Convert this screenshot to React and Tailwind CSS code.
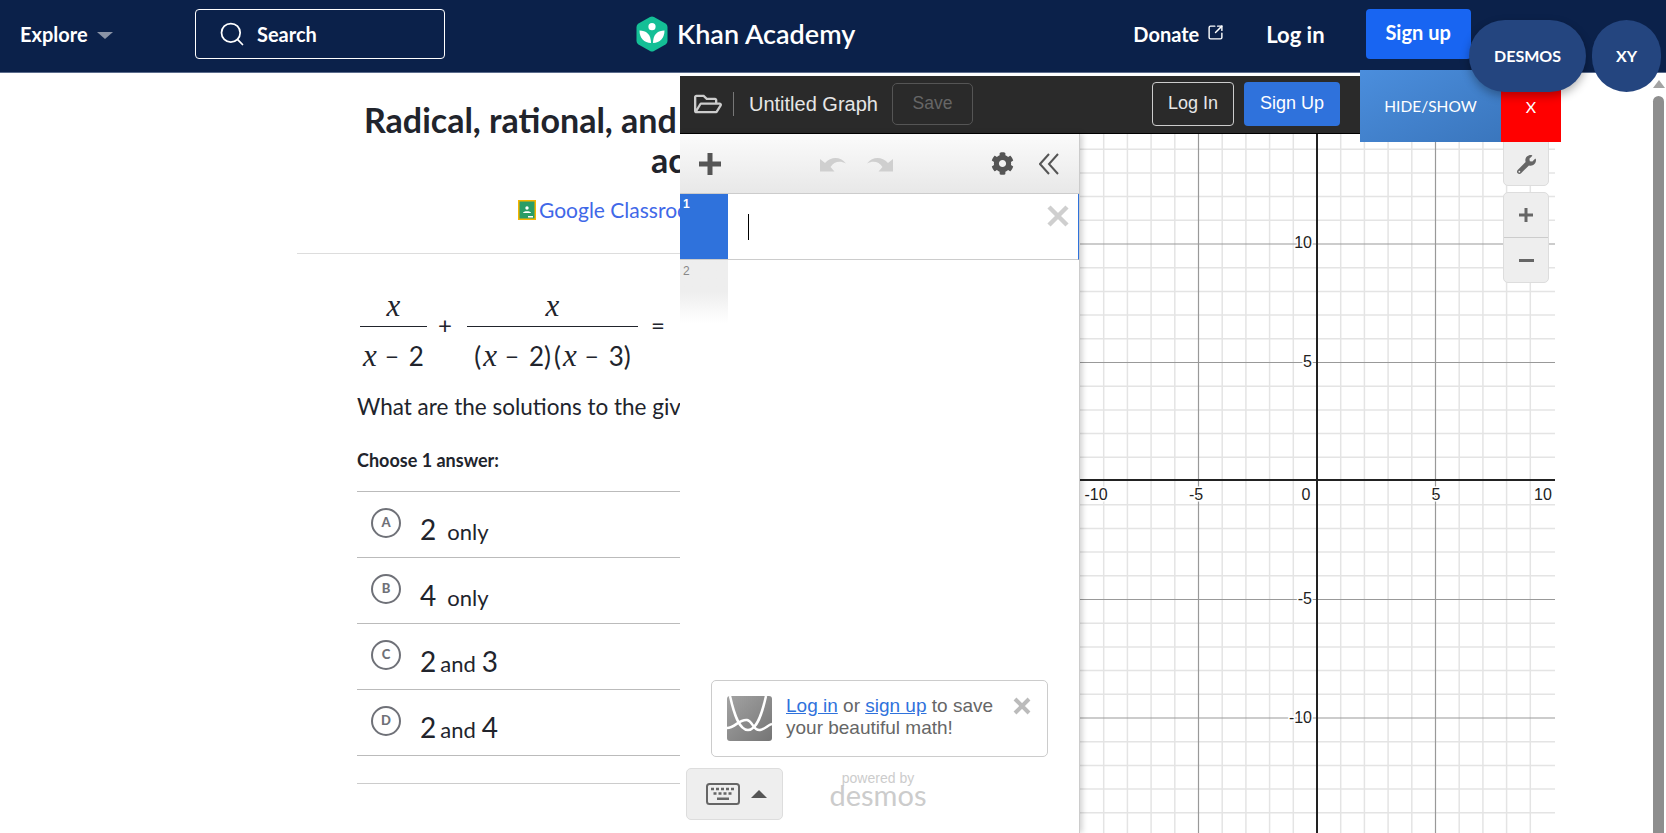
import React from 'react';
import { Search, SquareArrowOutUpRight } from 'lucide-react';
import { FaCog, FaRegFolderOpen, FaWrench } from 'react-icons/fa';

const UNIT = 23.7;
const AXIS_X = 237;
const AXIS_Y = 347;

const range = (from, to) => Array.from({ length: to - from + 1 }, (_, i) => from + i);

const KhanLogo = () => (
  <svg width="32" height="36" viewBox="0 0 32 36">
    <path d="M14 1 L2.500 7.500 Q0.500 8.700 0.500 11 L0.500 25 Q0.500 27.300 2.500 28.500 L14 35 Q16 36 18 35 L29.500 28.500 Q31.500 27.300 31.500 25 L31.500 11 Q31.500 8.700 29.500 7.500 L18 1 Q16 0 14 1 Z" fill="#14bf96" />
    <circle cx="16" cy="10.700" r="3.600" fill="#fff" />
    <path d="M3.500 14.500 C10 14.500 15 18 15 27 C8 27 3.500 22 3.500 14.500 Z" fill="#fff" />
    <path d="M28.500 14.500 C22 14.500 17 18 17 27 C24 27 28.500 22 28.500 14.500 Z" fill="#fff" />
  </svg>
);

const ClassroomIcon = () => (
  <svg width="18" height="20" viewBox="0 0 18 20" className="shrink-0">
    <rect width="18" height="20" fill="#f4b400" />
    <rect x="1.500" y="1.500" width="15" height="17" fill="#2a9d66" />
    <circle cx="9" cy="8" r="1.700" fill="#fff" />
    <path d="M5 13 C5 10.500 13 10.500 13 13 Z" fill="#fff" />
    <rect x="10" y="16" width="5" height="1.500" fill="#fff" />
  </svg>
);

const Frac = ({ width, top, bottom }) => (
  <div className="flex flex-col items-center" style={{ width }}>
    <div className="h-[36px] flex items-end pb-[7px] leading-none">{top}</div>
    <div className="w-full border-t border-[#21242c]" />
    <div className="h-[51px] flex items-center pt-[6px] leading-none whitespace-nowrap">{bottom}</div>
  </div>
);

const X = () => <span className="font-['Liberation_Serif',serif] italic text-[31px] leading-[26px]">x</span>;

const Term = ({ n }) => (
  <span className="inline-flex items-center">
    <X />
    <span className="ml-[8px] mr-[10px] text-[24px]">−</span>
    <span>{n}</span>
  </span>
);

const Equation = () => (
  <div className="flex items-start mt-[36px] ml-[63px] text-[26px] text-[#21242c]">
    <Frac width={67} top={<X />} bottom={<Term n="2" />} />
    <span className="ml-[11px] mt-[20px] w-[29px] text-[24px] leading-[30px]">+</span>
    <Frac
      width={171}
      top={<X />}
      bottom={
        <span className="inline-flex items-center">
          <span className="mr-[2px]">(</span><Term n="2" />)<span className="ml-[3px] mr-[2px]">(</span><Term n="3" />)
        </span>
      }
    />
    <span className="ml-[13px] mt-[20px] text-[24px] leading-[30px]">=</span>
  </div>
);

const options = [
  { letter: 'A', value: '2', rest: 'only', gap: 'ml-[11px]' },
  { letter: 'B', value: '4', rest: 'only', gap: 'ml-[11px]' },
  { letter: 'C', value: '2', rest: 'and', after: '3', gap: 'ml-[4px]' },
  { letter: 'D', value: '2', rest: 'and', after: '4', gap: 'ml-[4px]' },
];

const Option = ({ letter, value, rest, after, gap }) => (
  <div className="h-[66px] border-b border-[#bbbbbb] flex items-start">
    <div className="ml-[14px] mt-[16px] w-[30px] h-[30px] shrink-0 rounded-full border-2 border-[#6f7178] flex items-center justify-center text-[13px] font-black text-[#6f7178]">
      {letter}
    </div>
    <div className="ml-[19px] mt-[19px] flex items-baseline text-[#21242c] h-[36px]">
      <span className="text-[28px] leading-[36px]">{value}</span>
      <span className={`text-[22px] leading-[36px] ${gap}`}>{rest}</span>
      {after && <span className="ml-[6px] text-[28px] leading-[36px]">{after}</span>}
    </div>
  </div>
);

const Header = () => (
  <header className="h-[73px] pb-[5px] bg-[#0b214a] border-b border-[#5b6c8c] flex items-center text-white font-bold text-[20px] shrink-0">
    <div className="ml-[20px] w-[175px] flex items-center pt-[1px]">
      <span>Explore</span>
      <span className="ml-[9px] mt-[3px] w-0 h-0 border-l-[8px] border-r-[8px] border-t-[7px] border-l-transparent border-r-transparent border-t-[#8a93a6]" />
    </div>
    <div className="w-[250px] h-[50px] border border-white rounded-[4px] flex items-center pl-[22px]">
      <Search size={28} strokeWidth={1.5} className="shrink-0" />
      <span className="ml-[11px]">Search</span>
    </div>
    <div className="ml-[191px] flex items-center">
      <KhanLogo />
      <span className="ml-[9px] text-[27px] font-semibold leading-none">Khan Academy</span>
    </div>
    <div className="ml-[278px] flex items-center pt-[1px]">
      <span>Donate</span>
      <SquareArrowOutUpRight size={17} strokeWidth={2} className="ml-[8px] mb-[3px]" />
    </div>
    <span className="ml-[42px] pt-[1px] text-[22px]">Log in</span>
    <div className="ml-[41px] w-[105px] h-[50px] rounded-[4px] bg-[#1865f2] flex items-center justify-center pb-[3px]">
      Sign up
    </div>
  </header>
);

const Article = () => (
  <main className="ml-[297px] w-[383px] overflow-hidden font-['Lato',sans-serif] text-[#21242c]">
    <div className="pt-[27px] text-[34px] font-bold leading-[40px]">
      <h1 className="pl-[67px] whitespace-nowrap">Radical, rational, and</h1>
      <h1 className="pl-[354px] whitespace-nowrap">ac</h1>
    </div>
    <div className="mt-[18px] pl-[221px] h-[24px] flex items-center text-[21px] text-[#3f68e8] whitespace-nowrap">
      <ClassroomIcon />
      <span className="ml-[3px]">Google Classroo</span>
    </div>
    <div className="mt-[31px] border-t border-[#dddddd]" />
    <Equation />
    <p className="mt-[14px] ml-[60px] text-[22.500px] leading-[30px] whitespace-nowrap">What are the solutions to the giv</p>
    <p className="mt-[26px] ml-[60px] text-[18px] font-bold leading-[24px]">Choose 1 answer:</p>
    <div className="mt-[19px] ml-[60px] border-t border-[#bbbbbb]">
      {options.map((o) => (
        <Option key={o.letter} {...o} />
      ))}
    </div>
    <div className="ml-[60px] h-[28px] border-b border-[#cccccc]" />
  </main>
);

const Undo = ({ flip }) => (
  <svg width="26" height="16" viewBox="0 0 26 16" className={flip ? '-scale-x-100' : ''}>
    <path d="M0 15.500 L0 3 L5 7 C11 0.500 20 0 26 7.500 C20 4.500 14 5.500 10.500 11 L14.500 15.500 Z" fill="#cfcfcf" />
  </svg>
);

const DesmosMark = () => (
  <svg width="45" height="45" viewBox="0 0 45 45" className="shrink-0">
    <defs>
      <linearGradient id="mark" x1="0" y1="0" x2="1" y2="1">
        <stop offset="0" stopColor="#a3a3a3" />
        <stop offset="1" stopColor="#757575" />
      </linearGradient>
    </defs>
    <rect width="45" height="45" rx="3" fill="url(#mark)" />
    <path d="M3 0 C7 18 12 34 21 34 C30 34 35 18 39 0" fill="none" stroke="#fff" strokeWidth="2.500" />
    <path d="M0 32 C8 32 12 23 20 24 C26 25 26 35 33 34 C38 33 41 29 45 28" fill="none" stroke="#fff" strokeWidth="2.500" />
  </svg>
);

const ExpressionList = () => (
  <div className="w-[400px] h-full shrink-0 bg-white border-r border-[#cccccc] flex flex-col shadow-[2px_0_6px_rgba(0,0,0,0.2)] z-10 font-['Liberation_Sans',sans-serif]">
    <div className="h-[60px] shrink-0 bg-gradient-to-b from-[#fbfbfb] to-[#e8e8e8] border-b border-[#cccccc] flex items-center pl-[19px]">
      <svg width="22" height="22" viewBox="0 0 22 22">
        <path d="M8.500 0 H13.500 V8.500 H22 V13.500 H13.500 V22 H8.500 V13.500 H0 V8.500 H8.500 Z" fill="#555555" />
      </svg>
      <div className="ml-[99px] flex items-center gap-[21px]">
        <Undo />
        <Undo flip />
      </div>
      <FaCog size={23} color="#555555" className="ml-[98px]" />
      <svg width="20" height="22" viewBox="0 0 20 22" className="ml-[25px]">
        <path d="M10 1 L1 11 L10 21 M19 1 L10 11 L19 21" fill="none" stroke="#555555" strokeWidth="2" />
      </svg>
    </div>
    <div className="h-[66px] shrink-0 flex border-b border-[#cccccc] border-r border-r-[#2f72dc]">
      <div className="w-[48px] bg-[#2f72dc] text-white text-[12px] font-bold pl-[3px] pt-[1px]">1</div>
      <div className="flex-1 relative">
        <div className="ml-[20px] mt-[20px] w-px h-[26px] bg-black" />
        <svg width="22" height="22" viewBox="0 0 22 22" className="absolute right-[9px] top-[11px]">
          <path d="M2 2 L20 20 M20 2 L2 20" stroke="#cfcfcf" strokeWidth="4.500" />
        </svg>
      </div>
    </div>
    <div className="h-[63px] shrink-0 w-[48px] bg-gradient-to-b from-[#eeeeee] from-50% to-white text-[#888888] text-[12px] pl-[3px] pt-[2px]">2</div>
    <div className="mt-auto ml-[31px] w-[337px] h-[77px] shrink-0 border border-[#cccccc] rounded-[5px] flex items-start pl-[15px] pt-[15px]">
      <DesmosMark />
      <p className="ml-[14px] w-[222px] shrink-0 text-[19px] leading-[22px] text-[#666666] -mt-[1px] whitespace-nowrap">
        <span className="text-[#2f72dc] underline">Log in</span> or <span className="text-[#2f72dc] underline">sign up</span> to save<br />your beautiful math!
      </p>
      <svg width="18" height="18" viewBox="0 0 18 18" className="ml-[5px] mt-[1px] shrink-0">
        <path d="M2 2 L16 16 M16 2 L2 16" stroke="#bbbbbb" strokeWidth="4" />
      </svg>
    </div>
    <div className="mt-[11px] mb-[13px] h-[52px] shrink-0 flex items-start">
      <div className="ml-[6px] w-[97px] h-[52px] bg-[#eeeeee] border border-[#dddddd] rounded-[5px] flex items-center pl-[19px]">
        <svg width="34" height="22" viewBox="0 0 34 22">
          <rect x="1" y="1" width="32" height="20" rx="2.500" fill="none" stroke="#666666" strokeWidth="2" />
          <path d="M5 6 H29 M7.500 10.500 H26" stroke="#666666" strokeWidth="2.500" strokeDasharray="3 2" fill="none" />
          <rect x="11" y="14.500" width="12" height="2.500" fill="#666666" />
        </svg>
        <span className="ml-[11px] w-0 h-0 border-l-[8px] border-r-[8px] border-b-[8px] border-l-transparent border-r-transparent border-b-[#555555]" />
      </div>
      <div className="ml-[45px] w-[100px] flex flex-col items-center text-[#cccccc]">
        <span className="text-[14px] leading-[14px] mt-[3px]">powered by</span>
        <span className="font-['Lato',sans-serif] text-[29px] leading-[24px] -mt-[2px]">desmos</span>
      </div>
    </div>
  </div>
);

const Graph = () => {
  const xs = range(-10, 10);
  const ys = range(-15, 15);
  const xLabels = [
    { t: '-10', x: 16 },
    { t: '-5', x: 116 },
    { t: '0', x: 226 },
    { t: '5', x: 356 },
    { t: '10', x: 463 },
  ];
  const yLabels = [
    { t: '10', y: 109 },
    { t: '5', y: 228 },
    { t: '-5', y: 465 },
    { t: '-10', y: 584 },
  ];
  return (
    <svg width="475" height="700" viewBox="0 0 475 700" className="block bg-white font-['Liberation_Sans',sans-serif]">
      {xs.map((i) => {
        const x = AXIS_X + i * UNIT;
        return i % 5 === 0 ? null : <line key={i} x1={x} x2={x} y1="0" y2="700" stroke="#e4e4e4" strokeWidth="1.500" />;
      })}
      {ys.map((i) => {
        const y = AXIS_Y + i * UNIT;
        return i % 5 === 0 ? null : <line key={i} x1="0" x2="475" y1={y} y2={y} stroke="#e4e4e4" strokeWidth="1.500" />;
      })}
      {xs.filter((i) => i % 5 === 0 && Math.abs(i) % 10 !== 0).map((i) => {
        const x = AXIS_X + i * UNIT;
        return <line key={i} x1={x} x2={x} y1="0" y2="700" stroke="#999999" strokeWidth="1.200" />;
      })}
      {ys.filter((i) => i % 5 === 0 && i !== 0).map((i) => {
        const y = AXIS_Y + i * UNIT;
        return <line key={i} x1="0" x2="475" y1={y} y2={y} stroke="#999999" strokeWidth="1.200" />;
      })}
      <line x1="0" x2="475" y1={AXIS_Y - 1} y2={AXIS_Y - 1} stroke="#222222" strokeWidth="2" />
      <line x1={AXIS_X} x2={AXIS_X} y1="0" y2="700" stroke="#222222" strokeWidth="2" />
      {xLabels.map((l) => (
        <text key={l.t} x={l.x} y={AXIS_Y + 19} textAnchor="middle" fontSize="16" fill="#222222" stroke="#ffffff" strokeWidth="3" paintOrder="stroke">
          {l.t}
        </text>
      ))}
      {yLabels.map((l) => (
        <text key={l.t} x="232" y={l.y + 5} textAnchor="end" fontSize="16" fill="#222222" stroke="#ffffff" strokeWidth="3" paintOrder="stroke">
          {l.t}
        </text>
      ))}
    </svg>
  );
};

const GraphControls = () => (
  <div className="absolute left-[423px] top-[2px] w-[46px] flex flex-col gap-[6px]">
    <div className="h-[50px] bg-[#eeeeee] border border-[#dddddd] rounded-[5px] flex items-center justify-center pt-[7px]">
      <FaWrench size={19} color="#666666" />
    </div>
    <div className="bg-[#eeeeee] border border-[#dddddd] rounded-[5px] flex flex-col text-[#666666]">
      <div className="h-[45px] flex items-center justify-center border-b border-[#cccccc]">
        <svg width="16" height="16" viewBox="0 0 16 16"><path d="M6.500 1 H9.500 V6.500 H15 V9.500 H9.500 V15 H6.500 V9.500 H1 V6.500 H6.500 Z" fill="#666666" /></svg>
      </div>
      <div className="h-[44px] flex items-center justify-center">
        <div className="w-[15px] h-[3px] bg-[#666666]" />
      </div>
    </div>
  </div>
);

const DesmosWindow = () => (
  <div className="absolute left-[680px] top-[76px] w-[875px] h-[757px] flex flex-col overflow-hidden">
    <div className="h-[58px] pb-[2px] shrink-0 bg-[#2a2a2a] border-b border-black flex items-center text-[#e6e6e6] font-['Liberation_Sans',sans-serif]">
      <FaRegFolderOpen size={28} color="#cccccc" className="ml-[14px]" />
      <div className="ml-[11px] w-px h-[24px] bg-[#777777]" />
      <span className="ml-[15px] w-[128px] text-[20px] whitespace-nowrap">Untitled Graph</span>
      <div className="ml-[15px] w-[81px] h-[42px] border border-[#555555] rounded-[5px] flex items-center justify-center text-[17.500px] text-[#666666]">Save</div>
      <div className="ml-[179px] w-[82px] h-[44px] border border-[#cccccc] rounded-[4px] flex items-center justify-center text-[18px]">Log In</div>
      <div className="ml-[10px] w-[96px] h-[44px] bg-[#2f72dc] rounded-[4px] flex items-center justify-center text-[18px] text-white">Sign Up</div>
    </div>
    <div className="flex-1 flex min-h-0 relative">
      <ExpressionList />
      <div className="relative w-[475px] h-[700px] shrink-0">
        <Graph />
        <GraphControls />
      </div>
    </div>
  </div>
);

const FloatingButtons = () => (
  <div className="font-['Lato',sans-serif] text-white text-[16px]">
    <div className="absolute left-[1360px] top-[70px] w-[201px] h-[72px] flex">
      <div className="w-[141px] bg-gradient-to-br from-[#4b8edd] to-[#3a76bd] flex items-center justify-center text-[15.500px] pt-[1px]">HIDE/SHOW</div>
      <div className="w-[60px] bg-[#ff0000] flex items-center justify-center pt-[1px]">X</div>
    </div>
    <div className="absolute left-[1469px] top-[20px] w-[117px] h-[72px] rounded-[36px] bg-[#24457f] shadow-[0_4px_10px_rgba(0,0,0,0.3)] flex items-center justify-center font-bold">DESMOS</div>
    <div className="absolute left-[1592px] top-[20px] w-[69px] h-[72px] rounded-[36px] bg-[#24457f] flex items-center justify-center font-bold">XY</div>
  </div>
);

const Scrollbar = () => (
  <div className="w-[16px] h-[833px] pt-[80px] flex flex-col items-center pl-[1px]">
    <span className="w-0 h-0 border-l-[6px] border-r-[6px] border-b-[8px] border-l-transparent border-r-transparent border-b-[#a3a3a3]" />
    <div className="mt-[8px] w-[11px] flex-1 rounded-t-[6px] bg-[#8e8e8e]" />
  </div>
);

export default function App() {
  return (
    <div className="relative w-[1666px] h-[833px] overflow-hidden bg-white font-['Lato',sans-serif]">
      <Header />
      <Article />
      <div className="absolute right-0 top-0">
        <Scrollbar />
      </div>
      <DesmosWindow />
      <FloatingButtons />
    </div>
  );
}
